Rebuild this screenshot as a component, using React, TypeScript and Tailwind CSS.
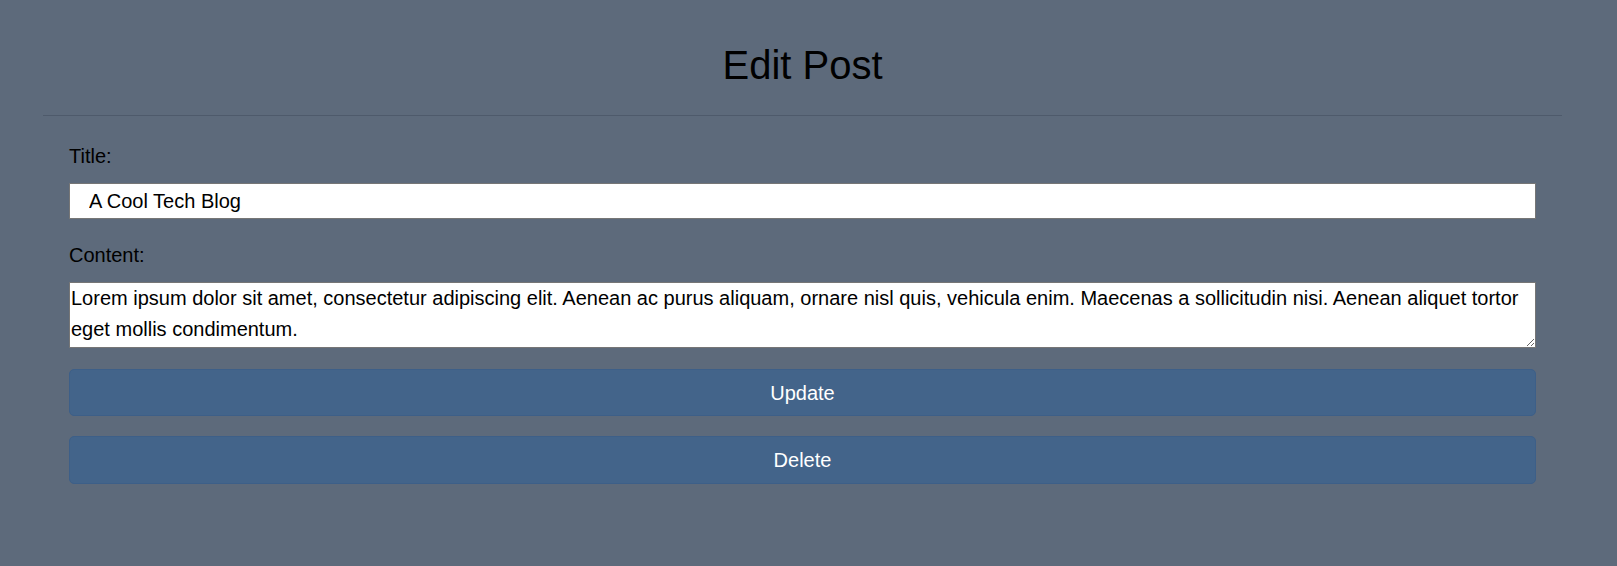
const EditPost = () => {
  return (
    <div className="min-h-screen bg-[#5d6a7b] pt-[42px] font-['Liberation_Sans',Arial,sans-serif] text-black">
      <div className="ml-[43px] w-[1519px]">
        <h1 className="text-[40px] leading-[46px] text-center font-normal mb-[27px]">Edit Post</h1>
        <hr className="border-0 border-t border-[#4e5a6b]" />

        <form className="px-[26px] pt-[29px]" onSubmit={(e) => e.preventDefault()}>
          <label htmlFor="title" className="block text-[20px] leading-[23px] mb-[15px]">Title:</label>
          <input
            id="title"
            type="text"
            defaultValue="A Cool Tech Blog"
            className="block w-full h-[36px] bg-white border border-[#767676] pl-[19px] text-[20px] outline-none mb-[25px]"
          />

          <label htmlFor="content" className="block text-[20px] leading-[23px] mb-[15px]">Content:</label>
          <textarea
            id="content"
            defaultValue="Lorem ipsum dolor sit amet, consectetur adipiscing elit. Aenean ac purus aliquam, ornare nisl quis, vehicula enim. Maecenas a sollicitudin nisi. Aenean aliquet tortor eget mollis condimentum."
            className="block w-full h-[66px] bg-white border border-[#767676] p-0 pl-[1px] text-[20px] leading-[31px] outline-none"
          />

          <button type="submit" className="block w-full h-[47px] mt-[21px] rounded-[5px] bg-[#43648a] border border-[#3d5f88] text-white text-[20px]">
            Update
          </button>
          <button type="button" className="block w-full h-[48px] mt-[20px] rounded-[5px] bg-[#43648a] border border-[#3d5f88] text-white text-[20px]">
            Delete
          </button>
        </form>
      </div>
    </div>
  );
};

export default function App() {
  return <EditPost />;
}
